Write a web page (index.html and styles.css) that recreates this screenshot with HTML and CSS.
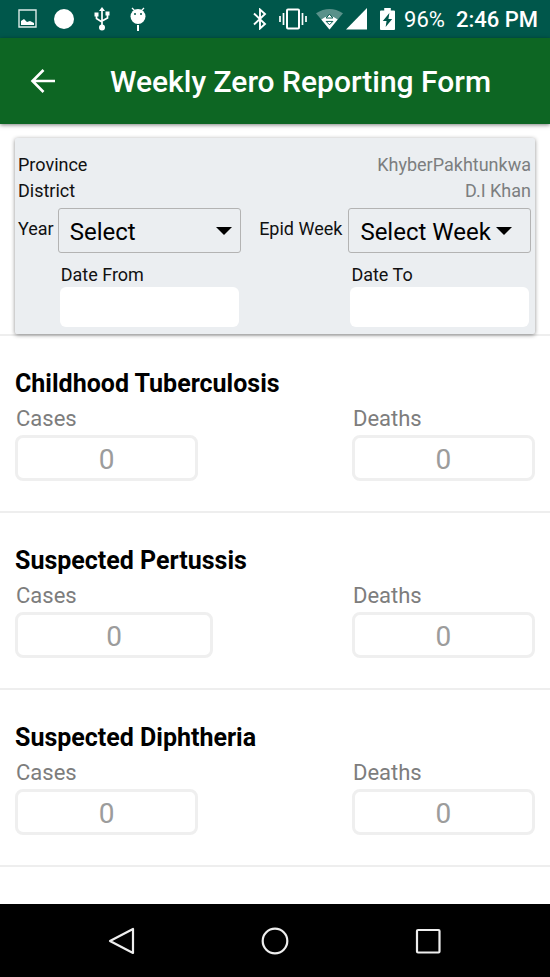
FILE: index.html
```html
<!DOCTYPE html>
<html lang="en">
<head>
<meta charset="utf-8">
<meta name="viewport" content="width=device-width, initial-scale=1">
<title>Weekly Zero Reporting Form</title>
<link rel="stylesheet" href="styles.css">
</head>
<body>
<div class="status">
  <div class="status-group status-left">
    <svg class="gallery" width="20" height="20" viewBox="0 0 20 20"><path d="M1 1h17v17H1z" fill="none" stroke="#dcebe9" stroke-width="1.4"/><path d="M3 16v-4l3-2 3 3 3-1 4 2v2z" fill="#fff"/></svg>
    <svg width="20" height="20" viewBox="0 0 20 20"><circle cx="10" cy="10" r="10" fill="#fff"/></svg>
    <svg width="16" height="24" viewBox="0 0 16 24" fill="none" stroke="#fff" stroke-width="1.7"><path d="M8 20V3M2.500 7v4.500L8 15M13.500 6v5L8 14"/><path d="M8 0l3 4H5zM.5 5.500h4v4h-4zM11.500 4.500h4v4h-4z" fill="#fff" stroke="none"/><circle cx="8" cy="20.500" r="3" fill="#fff" stroke="none"/></svg>
    <svg width="16" height="24" viewBox="0 0 16 24"><path d="M2 1l3 3M14 1l-3 3" stroke="#fff" stroke-width="1.300"/><circle cx="8" cy="9.500" r="7.500" fill="#fff"/><circle cx="5" cy="7" r="1" fill="#00574b"/><circle cx="11" cy="7" r="1" fill="#00574b"/><path d="M8 18v6" stroke="#fff" stroke-width="2"/></svg>
  </div>
  <div class="status-group status-right">
    <svg width="14" height="22" viewBox="0 0 14 22" fill="none" stroke="#fff" stroke-width="1.900"><path d="M1 5.500l11 10.500-5 4.500v-19l5 4.500L1 16.500"/></svg>
    <svg class="vibrate" width="28" height="22" viewBox="0 0 28 22" fill="none" stroke="#fff" stroke-width="2"><rect x="8" y="1.500" width="12" height="19" rx="1"/><path d="M4.500 5v12M23.500 5v12M1 8v6M27 8v6" stroke-width="1.700"/></svg>
    <svg width="27" height="22" viewBox="0 0 28 22"><path d="M0 5Q14-4 28 5L14 22z" fill="#59918a"/><path d="M5.500 11.500Q14 5 22.500 11.500L14 22z" fill="#fff"/><path d="M14 6l3.500 4h-7zM10.500 13.500h7L14 17z" fill="#fff" stroke="#00574b" stroke-width="1"/></svg>
    <svg class="signal" width="21" height="22" viewBox="0 0 21 22"><path d="M21 0v21.500H0z" fill="#fff"/></svg>
    <svg class="battery" width="15" height="22" viewBox="0 0 16 22" preserveAspectRatio="none"><path d="M1 2.500h3.500V0h7v2.500H15q1 0 1 1V21q0 1-1 1H1q-1 0-1-1V3.500q0-1 1-1z" fill="#fff"/><path d="M10 5l-7 8h4l-1 6 7-8H9z" fill="#00574b"/></svg>
    <span class="percent">96%</span>
    <span class="clock">2:46 PM</span>
  </div>
</div>
<header class="bar">
  <button class="back" type="button" aria-label="Back"><svg width="26" height="26" viewBox="0 0 26 26" fill="none" stroke="#fff" stroke-width="2.600"><path d="M25 13H2M13.500 2L2.500 13l11 11"/></svg></button>
  <h1>Weekly Zero Reporting Form</h1>
</header>
<main>
  <form>
    <section class="card">
      <dl class="place">
        <div><dt>Province</dt><dd>KhyberPakhtunkwa</dd></div>
        <div><dt>District</dt><dd>D.I Khan</dd></div>
      </dl>
      <div class="pickers">
        <div class="picker">
          <label class="side" for="year">Year</label>
          <span class="drop"><select id="year"><option>Select</option></select></span>
          <div class="date"><label for="from">Date From</label><input id="from" type="text"></div>
        </div>
        <div class="picker picker-week">
          <label class="side" for="week">Epid Week</label>
          <span class="drop"><select id="week"><option>Select Week</option></select></span>
          <div class="date"><label for="to">Date To</label><input id="to" type="text"></div>
        </div>
      </div>
    </section>
    <section class="disease">
      <h2>Childhood Tuberculosis</h2>
      <div class="counts">
        <div class="count"><label for="c1">Cases</label><input id="c1" type="text" inputmode="numeric" placeholder="0"></div>
        <div class="count"><label for="d1">Deaths</label><input id="d1" type="text" inputmode="numeric" placeholder="0"></div>
      </div>
    </section>
    <section class="disease">
      <h2>Suspected Pertussis</h2>
      <div class="counts">
        <div class="count count-wide"><label for="c2">Cases</label><input id="c2" type="text" inputmode="numeric" placeholder="0"></div>
        <div class="count"><label for="d2">Deaths</label><input id="d2" type="text" inputmode="numeric" placeholder="0"></div>
      </div>
    </section>
    <section class="disease">
      <h2>Suspected Diphtheria</h2>
      <div class="counts">
        <div class="count"><label for="c3">Cases</label><input id="c3" type="text" inputmode="numeric" placeholder="0"></div>
        <div class="count"><label for="d3">Deaths</label><input id="d3" type="text" inputmode="numeric" placeholder="0"></div>
      </div>
    </section>
  </form>
</main>
<nav class="keys">
  <button type="button" aria-label="Back"><svg width="28" height="28" viewBox="0 0 28 28"><path d="M25 2v24L2 14z"/></svg></button>
  <button type="button" aria-label="Home"><svg width="28" height="28" viewBox="0 0 28 28"><circle cx="14" cy="14" r="12.300"/></svg></button>
  <button type="button" aria-label="Recent apps"><svg width="28" height="28" viewBox="0 0 28 28"><rect x="3" y="3" width="22.500" height="22.500" rx="1"/></svg></button>
</nav>
</body>
</html>
```
FILE: styles.css
```css
* { box-sizing: border-box; }
body {
  margin: 0;
  min-height: 100vh;
  display: flex;
  flex-direction: column;
  background: #fff;
  color: #111;
  font-family: Roboto, "Liberation Sans", sans-serif;
}
svg { display: block; flex: none; }
button { border: 0; padding: 0; background: none; }

.status {
  height: 38px;
  padding: 0 12px 0 18px;
  display: flex;
  justify-content: space-between;
  align-items: center;
  background: #00574b;
  color: #fff;
}
.status-group { display: flex; align-items: center; }
.status-left { gap: 20px; }
.gallery { margin-right: -4px; }
.status-right { gap: 9px; }
.vibrate { margin-left: 3px; }
.signal { margin-left: -6px; }
.battery { margin-left: 4px; }
.percent { font-size: 22px; font-weight: 400; }
.clock { margin-left: 2px; font-size: 22px; font-weight: 500; }

.bar {
  height: 86px;
  padding: 0 30px;
  display: flex;
  align-items: center;
  gap: 54px;
  background: #0d6623;
  color: #fff;
  box-shadow: 0 1px 4px rgba(0, 0, 0, 0.5);
}
h1 { margin: 0; padding-top: 2px; font-size: 30px; line-height: 40px; font-weight: 500; }

main { flex: 1; }
.card {
  margin: 14px 15px 0;
  padding: 14px 4px 7px 3px;
  position: relative;
  background: #ebeef1;
  border-radius: 2px;
  box-shadow: 0 1px 4px rgba(0, 0, 0, 0.45);
  font-size: 18px;
}
.place { margin: 0 0 4px; line-height: 26px; }
.place div { display: flex; justify-content: space-between; }
.place dd { margin: 0; color: #7c7e80; }
.pickers { display: flex; justify-content: space-between; }
.picker {
  width: 43.5%;
  display: grid;
  grid-template-columns: auto 1fr;
  column-gap: 4px;
}
.picker-week { width: 53%; column-gap: 6px; }
.side { line-height: 42px; }
.drop { position: relative; display: block; }
.drop::after {
  content: "";
  position: absolute;
  top: 19px;
  right: 9px;
  border: 8px solid transparent;
  border-top-color: #000;
  border-bottom: 0;
  pointer-events: none;
}
.picker-week .drop::after { right: 19px; }
select {
  appearance: none;
  width: 100%;
  height: 45px;
  padding: 2px 11px 0;
  border: 1px solid #b3b3b3;
  border-radius: 3px;
  background: transparent;
  color: #000;
  font: 24px Roboto, "Liberation Sans", sans-serif;
}
.date { grid-column: 2; padding: 10px 2px 0; }
.date label { display: block; padding-left: 1px; line-height: 24px; }
.date input {
  display: block;
  width: 100%;
  height: 40px;
  padding: 0 8px;
  border: 0;
  border-radius: 6px;
  background: #fff;
  font: inherit;
}

.disease {
  padding: 33px 15px 30px;
  border-top: 2px solid #eee;
}
.disease:last-child { border-bottom: 2px solid #eee; }
h2 { margin: 0; font-size: 25px; line-height: 30px; font-weight: 700; color: #000; }
.counts { display: flex; justify-content: space-between; }
.count { width: 35.2%; }
.count-wide { width: 38.1%; }
.count label {
  display: block;
  padding: 5px 1px 1px;
  line-height: 30px;
  font-size: 22px;
  color: #7d7d7d;
}
.count input {
  display: block;
  width: 100%;
  height: 46px;
  padding: 2px 0 0;
  border: 3px solid #efefef;
  border-radius: 8px;
  background: #fff;
  text-align: center;
  color: #444;
  font: 28px Roboto, "Liberation Sans", sans-serif;
}
.count input::placeholder { color: #9c9c9c; opacity: 1; }

.keys {
  height: 73px;
  padding: 0 46px;
  display: flex;
  background: #000;
}
.keys button { flex: 1; display: flex; align-items: center; justify-content: center; }
.keys svg { fill: none; stroke: #eee; stroke-width: 2.2; stroke-linejoin: round; }
```
